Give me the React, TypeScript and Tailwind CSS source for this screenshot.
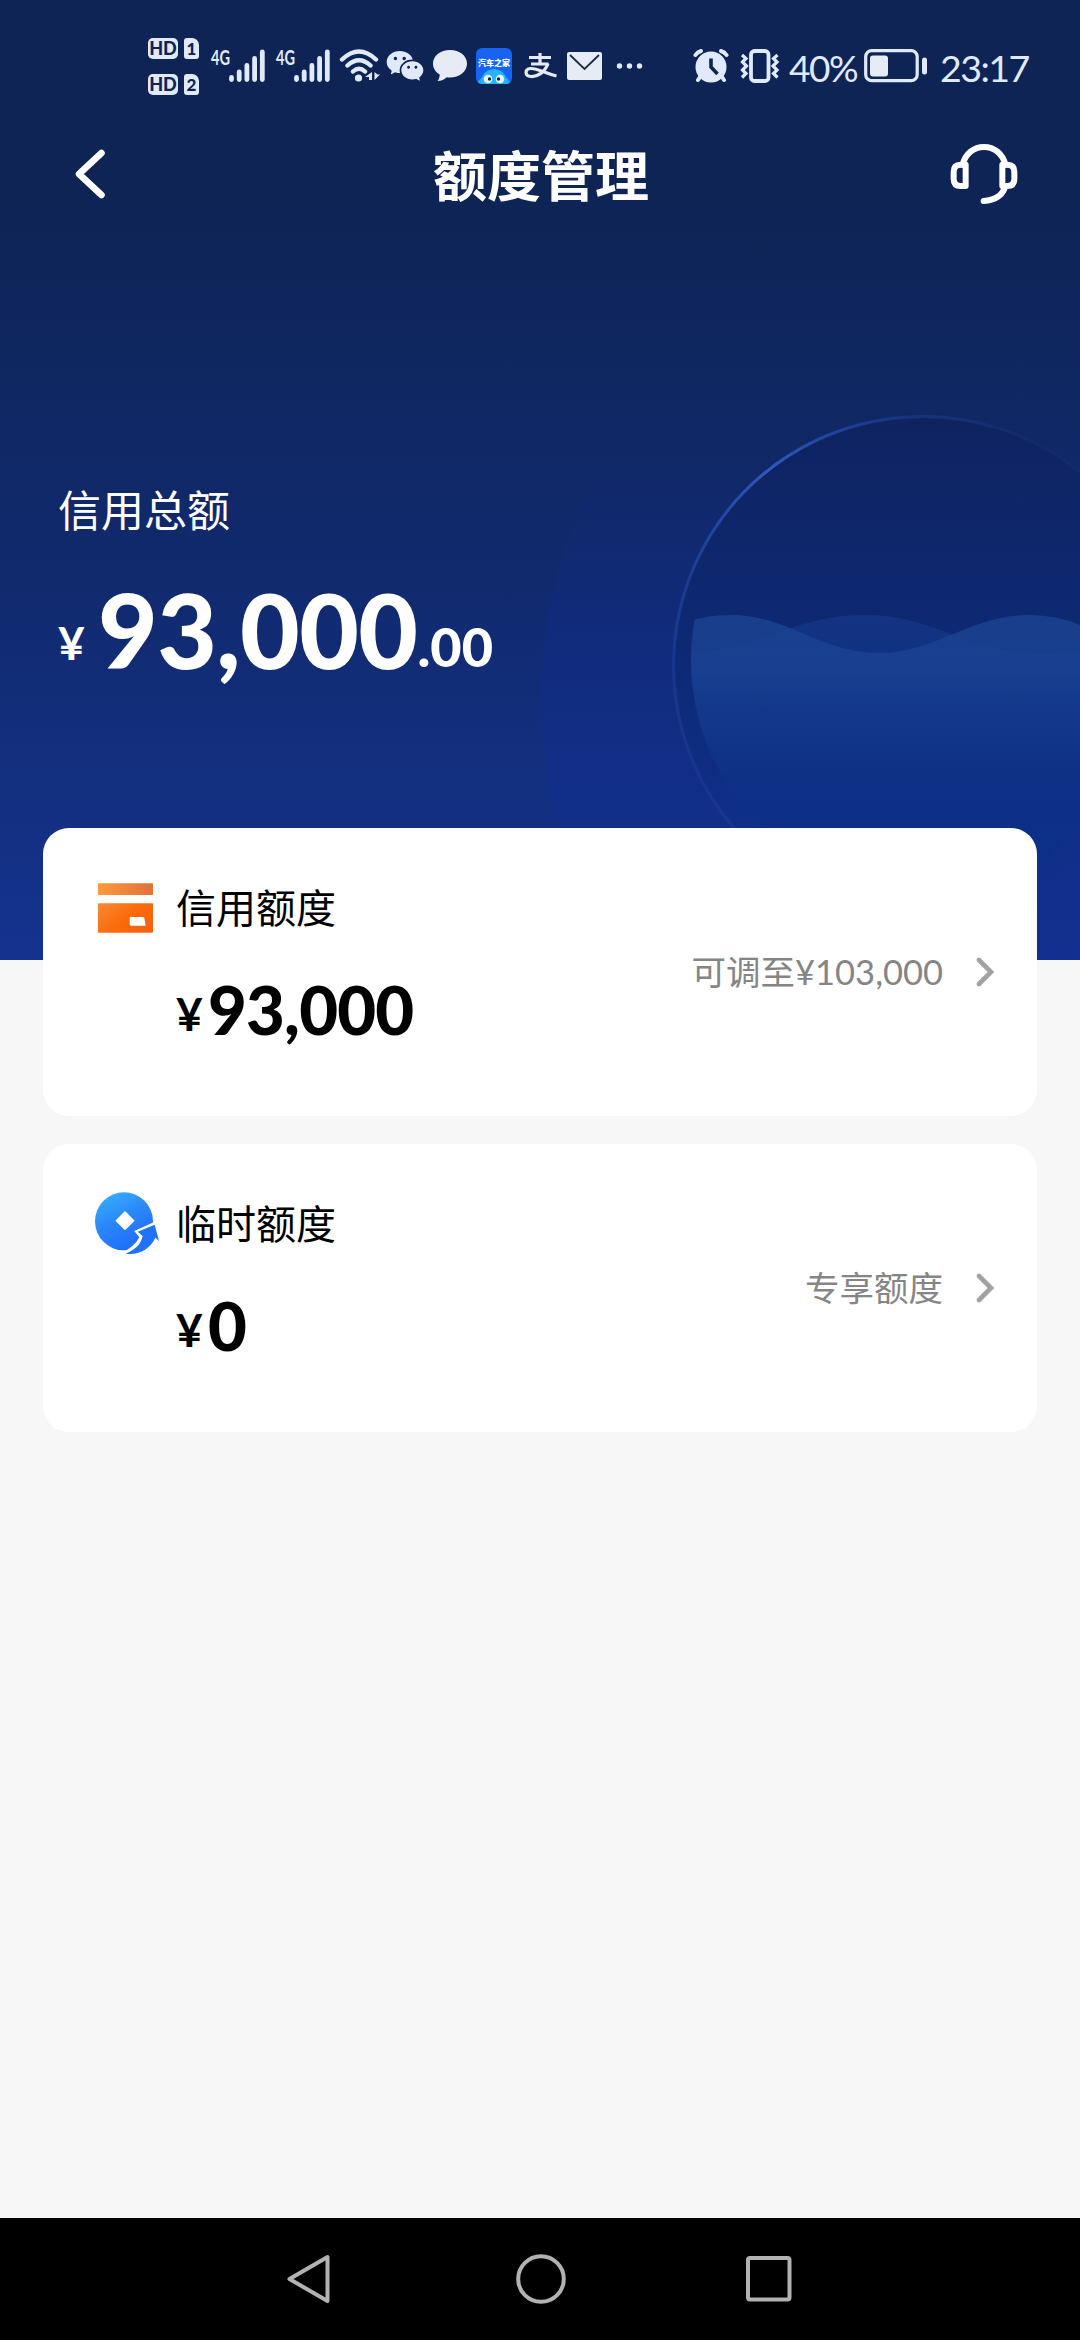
import type { ReactNode } from 'react';
import { RiWechatFill } from 'react-icons/ri';

const CardIcon = () => (
    <svg width="64" height="64" viewBox="194 194 192 192">
        <defs>
            <linearGradient id="cardTop" x1="0" y1="0" x2="1" y2="0">
                <stop offset="0" stopColor="#fa9a3c" />
                <stop offset="1" stopColor="#e2713a" />
            </linearGradient>
            <linearGradient id="cardBody" x1="0" y1="0" x2="1" y2="0.6">
                <stop offset="0" stopColor="#f98a34" />
                <stop offset="0.6" stopColor="#fb6a0b" />
                <stop offset="1" stopColor="#f3650f" />
            </linearGradient>
        </defs>
        <rect x="203" y="216" width="165" height="35" rx="2" fill="url(#cardTop)" />
        <rect x="203" y="276" width="165" height="88" rx="2" fill="url(#cardBody)" />
        <path d="M301 317h36q4 0 5 4l4 22h-43q-5 0-5-5v-17q0-4 3-4z" fill="#fff" />
    </svg>
);

const CoinIcon = () => (
    <svg width="64" height="64" viewBox="194 186 192 192">
        <defs>
            <linearGradient id="coin" x1="0.1" y1="0" x2="0.6" y2="1">
                <stop offset="0" stopColor="#39b3fb" />
                <stop offset="0.5" stopColor="#2a87fb" />
                <stop offset="1" stopColor="#1f6cf8" />
            </linearGradient>
        </defs>
        <circle cx="281" cy="274" r="87" fill="url(#coin)" />
        <path d="M284 243l29 29-29 29-29-29z" fill="#fff" />
        <path d="M268 372Q314 350 327 322L312 303 378 273 392 340 372 340Q350 372 300 380z" fill="#fff" />
        <path d="M286 371C312 360 332 344 337 318L322 305 373 284 386 332 375 323C362 352 330 377 286 371z" fill="#2173f6" />
    </svg>
);

interface LimitCardProps {
    icon: ReactNode;
    title: string;
    amount: string;
    action: string;
}

const LimitCard = ({ icon, title, amount, action }: LimitCardProps) => (
    <div className="flex h-[288px] items-center justify-between rounded-[26px] bg-white pl-[52px] pr-[42px]">
        <div className="flex h-full flex-col pt-[48px]">
            <div className="flex items-center">
                {icon}
                <h2 className="ml-[17px] text-[40px] leading-[64px] text-black">{title}</h2>
            </div>
            <p className="ml-[81px] mt-[27px] whitespace-nowrap text-[67px] font-black leading-[84px] tracking-[-0.8px] text-black">
                <span className="inline-block w-[32px] align-[4px] text-[46px] font-bold leading-none">¥</span>
                {amount}
            </p>
        </div>
        <button className="flex items-center text-[34.5px] text-[#858585]">
            <span>{action}</span>
            <svg className="ml-[32px]" width="20" height="30" viewBox="0 0 20 30" fill="none" stroke="#a2a2a2" strokeWidth="4.6" strokeLinecap="round">
                <path d="M4 3L16 15L4 27" />
            </svg>
        </button>
    </div>
);

const HdBadge = ({ sim }: { sim: string }) => (
    <div className="flex items-center justify-between">
        <span className="flex h-[21px] w-[30px] items-center justify-center rounded-[5px] bg-[#e1eafc] text-[18px] font-black leading-none text-[#0e2455]">HD</span>
        <span className="flex h-[21px] w-[15px] items-center justify-center rounded-[3px] rounded-tr-[7px] bg-[#e1eafc] text-[17px] font-black leading-none text-[#0e2455]">{sim}</span>
    </div>
);

const Signal = () => (
    <svg width="58" height="46" viewBox="-2 -5 58 46">
        <text x="0" y="16.5" fontSize="20.500" fontWeight="700" textLength="19" lengthAdjust="spacingAndGlyphs" fill="#e1eafc">4G</text>
        <g stroke="#e1eafc" strokeWidth="4.8" strokeLinecap="round">
            <path d="M20.5 29.5V31.5M28.2 24V31.5M35.9 17.5V31.5M43.6 10.5V31.5M51.3 4V31.5" />
        </g>
    </svg>
);

const StatusBar = () => (
    <div className="flex h-[132px] items-center pl-[148px] text-[#e1eafc]">
        <div className="flex w-[51px] flex-col gap-[15px]">
            <HdBadge sim="1" />
            <HdBadge sim="2" />
        </div>
        <div className="ml-[10px] flex gap-[7px]">
            <Signal />
            <Signal />
        </div>

        {/* wifi */}
        <svg className="ml-[7px]" width="42" height="36" viewBox="0 0 42 36" fill="none" stroke="#e1eafc" strokeWidth="4.4" strokeLinecap="round">
            <path d="M3 11.5Q20 -4.5 37 11.5M8.5 17.5Q20 7 31.5 17.5M14 23.5Q20 18 26 23.5" />
            <circle cx="19.5" cy="30" r="3.6" fill="#e1eafc" stroke="none" />
            <path d="M33 24v8h-3v-3h-4zM35.500 24v8l5.500-5.500h-2.500z" fill="#e1eafc" stroke="none" />
        </svg>
        <RiWechatFill className="ml-[4px]" size={40} />

        {/* message bubble */}
        <svg className="ml-[7px]" width="36" height="34" viewBox="0 0 36 34">
            <path d="M18 1C8.500 1 1 6.800 1 14.500c0 4.800 2.600 8.500 6.700 11 0 2.300-.5 4.500-2.200 6.500 4 0 7-1.500 9.200-3.700 11.500 1.300 20.300-5 20.300-13.800C35 6.800 27.500 1 18 1z" fill="#e6ebf5" />
        </svg>

        {/* app tile */}
        <div className="ml-[8px] flex h-[36px] w-[36px] flex-col items-center overflow-hidden rounded-[6px] bg-[#1763f4] pt-[11px]">
            <span className="whitespace-nowrap text-[8px] font-black leading-[9px] text-white">汽车之家</span>
            <svg width="36" height="16" viewBox="0 0 36 16">
                <path d="M4 16Q6 2 18 1Q30 2 32 16z" fill="#25b4fb" />
                <path d="M0 16L5 10V16zM36 16L31 10V16z" fill="#1ea8fa" />
                <circle cx="12" cy="11" r="4.300" fill="#e8f8ff" />
                <circle cx="24" cy="11" r="4.300" fill="#e8f8ff" />
                <circle cx="13.500" cy="11" r="1.700" fill="#123" />
                <circle cx="22.500" cy="11" r="1.700" fill="#123" />
            </svg>
        </div>

        {/* pay logo */}
        <svg className="ml-[12px]" width="34" height="28" viewBox="0 0 34 28" fill="none" stroke="#e6ebf5" strokeWidth="3.200">
            <path d="M16 1V12M5 5.500H27M7 12H24.500" />
            <path d="M24 11.500C21 20 13.500 25 7 24.500C0.500 24 0.500 17 6.500 16.500C13 16 20 21 32.500 24" />
        </svg>

        {/* mail */}
        <svg className="ml-[9px]" width="35" height="28" viewBox="0 0 35 28">
            <rect width="35" height="28" rx="2" fill="#e6ebf5" />
            <path d="M3 3L17.500 17L32 3" fill="none" stroke="#1b2a4d" strokeWidth="1.800" />
        </svg>
        <svg className="ml-[14px]" width="27" height="8" viewBox="0 0 27 8" fill="#e1eafc">
            <circle cx="3.500" cy="4" r="2.700" />
            <circle cx="13.500" cy="4" r="2.700" />
            <circle cx="23.500" cy="4" r="2.700" />
        </svg>

        {/* alarm */}
        <svg className="ml-[50px]" width="36" height="34" viewBox="0 0 36 34" fill="none" stroke="#e1eafc" strokeWidth="4" strokeLinecap="round">
            <circle cx="18" cy="18" r="15.500" fill="#e1eafc" stroke="none" />
            <path d="M2.500 6Q4.500 3 8 2M33.500 6Q31.500 3 28 2M7 28L5 31M29 28L31 31" />
            <path d="M18 9.500V18L24.500 25" stroke="#0e2455" strokeWidth="3.600" strokeLinecap="butt" />
        </svg>

        {/* vibrate */}
        <svg className="ml-[10px]" width="42" height="34" viewBox="0 0 42 34" fill="none" stroke="#e1eafc" strokeWidth="3.200">
            <rect x="12" y="2" width="17.500" height="30" rx="3.500" strokeWidth="3.800" />
            <path d="M3 6L7 9.500L3.500 13L7.500 17L3.500 21L7 24.500L3 28.500M38.500 6L34.500 9.500L38 13L34 17L38 21L34.500 24.500L38.500 28.500" />
        </svg>
        <span className="ml-[8px] w-[75px] whitespace-nowrap pt-[3px] text-[37px] leading-none tracking-[-1.500px]">40%</span>

        {/* battery */}
        <svg width="64" height="34" viewBox="0 0 64 34">
            <rect x="1.700" y="1.700" width="51.500" height="30" rx="6" fill="none" stroke="#e1eafc" strokeWidth="3.200" />
            <rect x="6" y="6.500" width="18" height="21" rx="3" fill="#e6ebf5" />
            <rect x="58" y="8.500" width="5" height="17" rx="2.500" fill="#e1eafc" />
        </svg>
        <span className="ml-[12px] whitespace-nowrap pt-[3px] text-[37.500px] leading-none tracking-[-1.500px]">23:17</span>
    </div>
);

const Header = () => (
    <header className="flex h-[84px] items-center justify-between pl-[72px] pr-[62px]">
        <button>
            <svg width="36" height="50" viewBox="0 0 36 50" fill="none" stroke="#fff" strokeWidth="6.500" strokeLinecap="round" strokeLinejoin="round">
                <path d="M29.500 4L7 25L29.500 46" />
            </svg>
        </button>
        <h1 className="ml-[24px] pt-[5px] text-[54px] font-bold leading-none text-white">额度管理</h1>
        <button>
            <svg width="68" height="62" viewBox="60 39 204 186" fill="none" stroke="#fff" strokeWidth="18" strokeLinecap="round">
                <path d="M98 104C106 70 132 51 162 51C192 51 218 70 226 104" />
                <path d="M107 104V168H92Q71 168 71 147V125Q71 104 92 104zM217 104V168H232Q253 168 253 147V125Q253 104 232 104z" strokeLinejoin="round" />
                <path d="M225 172Q212 210 161 213" />
            </svg>
        </button>
    </header>
);

const Backdrop = () => (
    <svg className="absolute inset-0" width="1080" height="960" viewBox="0 0 1080 960">
        <defs>
            <linearGradient id="halo" gradientUnits="userSpaceOnUse" x1="0" y1="460" x2="0" y2="840">
                <stop offset="0" stopColor="#102b8a" stopOpacity="0" />
                <stop offset="0.500" stopColor="#102b8a" stopOpacity="0.400" />
                <stop offset="1" stopColor="#102f90" stopOpacity="0.550" />
            </linearGradient>
            <linearGradient id="globe" x1="0" y1="0" x2="0" y2="1">
                <stop offset="0" stopColor="#0f2360" />
                <stop offset="0.500" stopColor="#0d2a76" />
                <stop offset="0.850" stopColor="#0d2f88" stopOpacity="0.500" />
            </linearGradient>
            <linearGradient id="rim" gradientUnits="userSpaceOnUse" x1="680" y1="760" x2="1040" y2="440">
                <stop offset="0" stopColor="#2c56b8" stopOpacity="0.200" />
                <stop offset="0.250" stopColor="#2450b4" stopOpacity="0.500" />
                <stop offset="0.550" stopColor="#3059c0" />
                <stop offset="0.800" stopColor="#1d439e" stopOpacity="0.600" />
                <stop offset="1" stopColor="#2a4a94" stopOpacity="0.100" />
            </linearGradient>
            <linearGradient id="water" gradientUnits="userSpaceOnUse" x1="0" y1="615" x2="0" y2="810">
                <stop offset="0" stopColor="#1c4694" stopOpacity="0.750" />
                <stop offset="0.300" stopColor="#1b4497" stopOpacity="0.700" />
                <stop offset="1" stopColor="#0b2f85" stopOpacity="0.300" />
            </linearGradient>
            <linearGradient id="waterBack" gradientUnits="userSpaceOnUse" x1="0" y1="615" x2="0" y2="810">
                <stop offset="0" stopColor="#16398a" stopOpacity="0.700" />
                <stop offset="1" stopColor="#0b2f85" stopOpacity="0.300" />
            </linearGradient>
            <clipPath id="inner">
                <circle cx="922" cy="660" r="231" />
            </clipPath>
        </defs>
        <circle cx="1021" cy="700" r="480" fill="url(#halo)" />
        <circle cx="922" cy="665" r="249" fill="url(#globe)" />
        <path d="M734 828A249 249 0 0 1 1080 472.500" fill="none" stroke="url(#rim)" strokeWidth="3" />
        <g clipPath="url(#inner)">
            <path d="M680 653C760 653 790 615 864 615C935 615 965 653 1040 653Q1062 653 1080 651V960H680z" fill="url(#waterBack)" />
            <path d="M680 624Q705 615 731 615C788 615 820 653 879 653C936 653 970 615 1029 615Q1056 615 1080 625V960H680z" fill="url(#water)" />
        </g>
    </svg>
);

const NavBar = () => (
    <nav className="flex h-[122px] items-center justify-between bg-black pl-[283px] pr-[286px]">
        <svg width="50" height="54" viewBox="0 0 50 54" fill="none" stroke="#b2b2b2" strokeWidth="4" strokeLinejoin="round">
            <path d="M44.500 5V49L6.500 27z" />
        </svg>
        <svg width="54" height="54" viewBox="0 0 54 54" fill="none" stroke="#b2b2b2" strokeWidth="4">
            <circle cx="29" cy="27" r="22.800" />
        </svg>
        <svg width="50" height="50" viewBox="0 0 50 50" fill="none" stroke="#b2b2b2" strokeWidth="4">
            <rect x="4" y="4" width="41.500" height="41.500" rx="2" />
        </svg>
    </nav>
);

export default function App() {
    return (
        <div className="flex h-[2340px] w-[1080px] flex-col overflow-hidden bg-[#f7f7f7] font-[Lato,'Noto_Sans_CJK_SC',sans-serif]">
            <section className="relative h-[960px] shrink-0 bg-linear-to-b from-[#0e2455] from-20% via-[#112a6e] via-60% to-[#14338f]">
                <Backdrop />
                <div className="relative">
                    <StatusBar />
                    <Header />
                    {/* Total limit */}
                    <div className="pl-[58px] pt-[263px] text-white">
                        <p className="text-[43px] leading-[64px]">信用总额</p>
                        <p className="mt-[26px] whitespace-nowrap text-[103px] font-black leading-[120px]">
                            <span className="inline-block w-[40px] align-[9px] text-[46px] font-bold leading-none">¥</span>
                            <span className="tracking-[-0.600px]">93,000</span>
                            <span className="align-[2px] text-[54px] leading-none">.00</span>
                        </p>
                    </div>
                </div>
            </section>

            <main className="relative -mt-[132px] flex flex-1 flex-col gap-[28px] px-[43px]">
                <LimitCard icon={<CardIcon />} title="信用额度" amount="93,000" action="可调至¥103,000" />
                <LimitCard icon={<CoinIcon />} title="临时额度" amount="0" action="专享额度" />
            </main>

            <NavBar />
        </div>
    );
}
